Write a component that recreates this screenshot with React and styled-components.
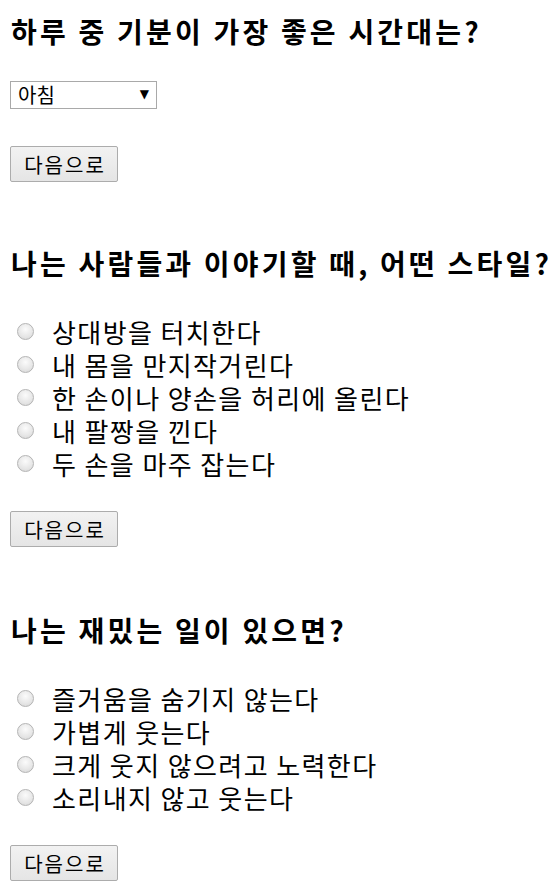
import React from "react";
import styled, { createGlobalStyle } from "styled-components";

const Global = createGlobalStyle`
  html, body { margin: 0; padding: 0; background: #fff; }
  body {
    font-family: "Noto Sans CJK KR", "Noto Sans", sans-serif;
    color: #000;
  }
`;

const Page = styled.div`
  padding: 0 10px 10px 10px;
  display: flex;
  flex-direction: column;
`;

const Section = styled.form`
  display: flex;
  flex-direction: column;
  align-items: flex-start;
  margin-top: ${(p) => p.$top}px;
`;

const Title = styled.h2`
  margin: 0;
  font-size: 28px;
  font-weight: 700;
  line-height: 34px;
  letter-spacing: 3.2px;
  padding-left: 1px;
  white-space: nowrap;
`;

const SelectWrap = styled.div`
  position: relative;
  margin-top: 33px;
  width: 147px;
  height: 28px;
  &::after {
    content: "▼";
    position: absolute;
    right: 8px;
    top: 5px;
    font-size: 12px;
    line-height: 16px;
    color: #000;
    pointer-events: none;
    font-family: "DejaVu Sans", sans-serif;
  }
`;

const Select = styled.select`
  appearance: none;
  -webkit-appearance: none;
  width: 100%;
  height: 100%;
  font-family: inherit;
  font-size: 20px;
  line-height: 26px;
  border: 1px solid #a9a9a9;
  border-radius: 0;
  background: #fff;
  color: #000;
  padding: 0 7px;
  margin: 0;
`;

const Options = styled.div`
  margin-top: 35px;
  display: flex;
  flex-direction: column;
  padding-left: 7px;
`;

const Option = styled.label`
  display: flex;
  align-items: center;
  height: 33px;
  line-height: 33px;
  font-size: 26px;
  letter-spacing: 1.4px;
  white-space: nowrap;
`;

const Radio = styled.span`
  width: 15px;
  height: 15px;
  border-radius: 50%;
  border: 1px solid #b4b4b4;
  background: radial-gradient(circle at 50% 35%, #fbfbfb 0%, #e6e6e6 60%, #d4d4d4 100%);
  margin-right: 18px;
  flex: none;
`;

const Button = styled.button`
  margin-top: ${(p) => p.$top}px;
  height: 36px;
  width: 108px;
  font-family: inherit;
  font-size: 20px;
  letter-spacing: 2px;
  padding: 0 0 0 2px;
  border: 1px solid #acacac;
  border-radius: 2px;
  background: linear-gradient(#f2f2f2, #e5e5e5);
  color: #000;
`;

const sections = [
  { title: "하루 중 기분이 가장 좋은 시간대는?", select: ["아침", "점심", "저녁", "밤"] },
  {
    title: "나는 사람들과 이야기할 때, 어떤 스타일?",
    options: ["상대방을 터치한다", "내 몸을 만지작거린다", "한 손이나 양손을 허리에 올린다", "내 팔짱을 낀다", "두 손을 마주 잡는다"],
  },
  {
    title: "나는 재밌는 일이 있으면?",
    options: ["즐거움을 숨기지 않는다", "가볍게 웃는다", "크게 웃지 않으려고 노력한다", "소리내지 않고 웃는다"],
  },
];

export default function App() {
  return (
    <Page>
      <Global />
      {sections.map((s, i) => (
        <Section key={i} $top={i === 0 ? 14 : i === 1 ? 64 : 66} onSubmit={(e) => e.preventDefault()}>
          <Title>{s.title}</Title>
          {s.select ? (
            <SelectWrap>
              <Select defaultValue={s.select[0]}>
                {s.select.map((o) => (
                  <option key={o}>{o}</option>
                ))}
              </Select>
            </SelectWrap>
          ) : (
            <Options>
              {s.options.map((o) => (
                <Option key={o}>
                  <Radio />
                  {o}
                </Option>
              ))}
            </Options>
          )}
          <Button type="button" $top={s.select ? 37 : 31}>다음으로</Button>
        </Section>
      ))}
    </Page>
  );
}
